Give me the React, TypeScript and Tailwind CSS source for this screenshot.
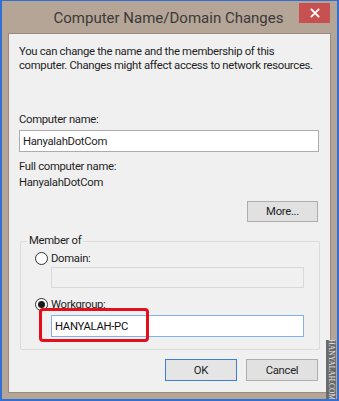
import React from "react";

export default function App() {
  const font = { fontFamily: 'Roboto, "Liberation Sans", sans-serif' };
  return (
    <div className="relative w-[339px] h-[401px] bg-[#b5a597] border-l-2 border-r-2 border-b-2 border-t border-[#2f6fd6] overflow-hidden" style={font}>
      {/* title bar */}
      <div className="relative h-[32px] flex items-center justify-center">
        <span className="text-[15px] text-[#3a3a3a] leading-none mt-[3px] mr-[2px]">Computer Name/Domain Changes</span>
        <div className="absolute right-[7px] top-[2px] w-[31px] h-[20px] bg-[#c75050] flex items-center justify-center">
          <svg width="10" height="10" viewBox="0 0 10 10">
            <path d="M1.5 1.5 L8.5 8.5 M8.5 1.5 L1.5 8.5" stroke="#fff" strokeWidth="1.8" strokeLinecap="square" />
          </svg>
        </div>
      </div>
      {/* content */}
      <div className="ml-[6px] mr-[6px] h-[360px] bg-[#f0f0f0] border border-[#988a7e] text-[11.3px] tracking-[-0.3px] text-[#1e1e1e] leading-[15px]">
        <div className="pl-[10px] pr-[4px] pt-[11px]">
          <p className="leading-[14px] whitespace-nowrap">You can change the name and the membership of this<br />computer. Changes might affect access to network resources.</p>
          <div className="mt-[39px]">Computer name:</div>
          <div className="mt-[3px] w-[300px] h-[22px] bg-white border border-[#acacac] flex items-center px-[3px]">HanyalahDotCom</div>
          <div className="mt-[7px]">Full computer name:</div>
          <div className="mt-[1px]">HanyalahDotCom</div>
          <div className="mt-[11px] flex justify-end pr-[8px]">
            <div className="w-[71px] h-[21px] bg-[#e1e1e1] border border-[#adadad] flex items-center justify-center">More...</div>
          </div>
          {/* group box */}
          <div className="relative mt-[19px] ml-[1px] w-[300px] h-[109px] border border-[#dcdcdc] rounded-[2px]">
            <div className="absolute -top-[9px] left-[6px] px-[2px] bg-[#f0f0f0]">Member of</div>
            <div className="pl-[14px] pt-[9px]">
              <div className="flex items-center gap-[3px]">
                <span className="w-[13px] h-[13px] rounded-full border border-[#333] bg-white" />
                <span>Domain:</span>
              </div>
              <div className="mt-[1px] ml-[16px] w-[253px] h-[21px] bg-[#f0f0f0] border border-[#d9d9d9]" />
              <div className="mt-[9px] flex items-center gap-[3px]">
                <span className="w-[13px] h-[13px] rounded-full border border-[#333] bg-white flex items-center justify-center">
                  <span className="w-[7px] h-[7px] rounded-full bg-[#1a1a1a]" />
                </span>
                <span>Workgroup:</span>
              </div>
              <div className="mt-[3px] ml-[16px] w-[253px] h-[22px] bg-white border border-[#7eb4ea] flex items-center px-[3px] text-[#111]">HANYALAH-PC</div>
            </div>
          </div>
          <div className="mt-[9px] flex justify-end gap-[9px] pr-[8px]">
            <div className="w-[72px] h-[22px] bg-[#e5e5e5] border border-[#3c7fd4] flex items-center justify-center">OK</div>
            <div className="w-[72px] h-[22px] bg-[#e1e1e1] border border-[#adadad] flex items-center justify-center">Cancel</div>
          </div>
        </div>
      </div>
      {/* red highlight */}
      <div className="absolute left-[37px] top-[307px] w-[110px] h-[34px] border-[3px] border-[#e30f1b] rounded-[4px]" />
      {/* watermark */}
      <div className="absolute right-[1px] top-[339px] w-[10px] h-[59px] bg-[#6a6a6a] flex items-center justify-center">
        <span className="block whitespace-nowrap text-[7.5px] leading-none text-[#e8e8e8] rotate-90" style={{ fontFamily: '"Liberation Serif", serif' }}>HANYALAH.COM</span>
      </div>
    </div>
  );
}
